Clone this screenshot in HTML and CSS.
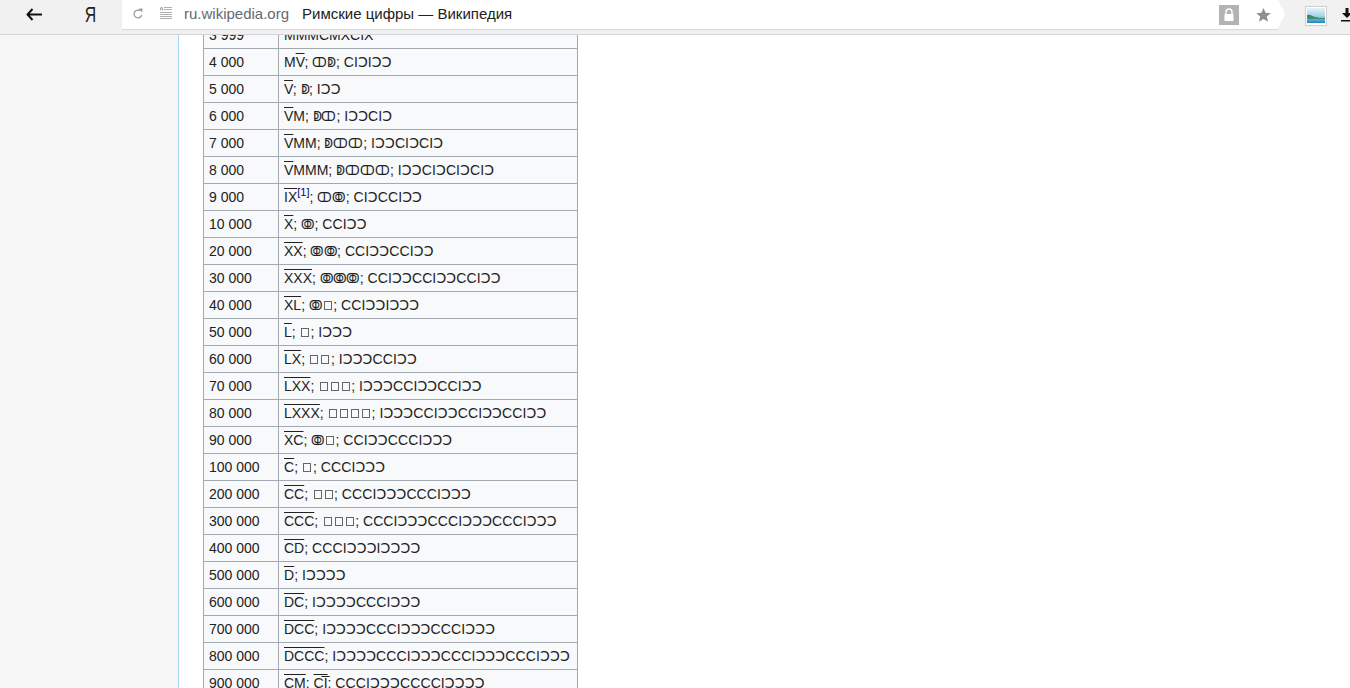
FILE: index.html
```html
<!DOCTYPE html>
<html lang="ru">
<head>
<meta charset="utf-8">
<title>Римские цифры — Википедия</title>
<link rel="stylesheet" href="styles.css">
</head>
<body>
<header class="toolbar">
  <svg class="back" width="16" height="13" viewBox="0 0 16 13"><path d="M6.500 1 1.500 6.500 6.500 12M2 6.500h14" fill="none" stroke="#111" stroke-width="2"/></svg>
  <span class="ya">Я</span>
  <div class="address">
    <svg class="reload" width="10" height="11" viewBox="0 0 10 11"><path d="M8.800 6.800A3.900 3.900 0 1 1 7.600 3" fill="none" stroke="#9a9a9a" stroke-width="1.300"/><path d="M5.800 .4 9.400 .4 9.400 4.200Z" fill="#9a9a9a"/></svg>
    <svg class="reader" width="12" height="13" viewBox="0 0 12 13"><path d="M4 .5h8M4 2.500h8M0 5.500h12M0 7.500h12M0 9.500h12M0 11.500h12" fill="none" stroke="#b0b0b0"/><path d="M0 3.500 1.500 0 3 3.500" fill="none" stroke="#777" stroke-width=".8"/></svg>
    <span class="host">ru.wikipedia.org</span>
    <span class="title">Римские цифры — Википедия</span>
    <span class="lock"><svg width="12" height="14" viewBox="0 0 12 14"><path d="M3 6V4a3 3 0 0 1 6 0v2" fill="none" stroke="#fff" stroke-width="1.400"/><rect x="1.500" y="6" width="9" height="7" fill="#fff"/></svg></span>
    <svg class="star" width="15" height="14" viewBox="0 0 16 15"><path d="M8 0l2.200 5.200 5.600.4-4.300 3.600 1.400 5.500L8 11.800l-4.900 2.900 1.400-5.500L.2 5.600l5.600-.4z" fill="#8f8f8f"/></svg>
  </div>
  <svg class="thumb" width="22" height="20" viewBox="0 0 22 20"><defs><linearGradient id="sky" x1="0" y1="0" x2="0" y2="1"><stop offset="0" stop-color="#e4f2f7"/><stop offset=".5" stop-color="#a9d8ea"/><stop offset="1" stop-color="#1f86bd"/></linearGradient></defs><rect x=".5" y=".5" width="21" height="19" fill="#fff" stroke="#cfcfcf"/><rect x="2" y="2" width="18" height="15" fill="url(#sky)"/><path d="M2 9c3-1 5 1 8 2s6 1 10 1v1H2z" fill="#3f8a68"/></svg>
  <svg class="download" width="12" height="14" viewBox="0 0 12 14"><path d="M4.500 0h3v5h3.500L6 10 1 5h3.500zM0 12h12v1.600H0z" fill="#111"/></svg>
</header>
<div class="page">
  <aside class="sidebar"></aside>
  <main class="content">
    <table class="numerals">
      <tr><td>3 999</td><td>MMMCMXCIX</td></tr>
      <tr><td>4 000</td><td>M<span class="ov">V</span>; <span class="m">ↀ</span><span class="m">ↁ</span>; <span class="ap">CIↃIↃↃ</span></td></tr>
      <tr><td>5 000</td><td><span class="ov">V</span>; <span class="m">ↁ</span>; <span class="ap">IↃↃ</span></td></tr>
      <tr><td>6 000</td><td><span class="ov">V</span>M; <span class="m">ↁ</span><span class="m">ↀ</span>; <span class="ap">IↃↃCIↃ</span></td></tr>
      <tr><td>7 000</td><td><span class="ov">V</span>MM; <span class="m">ↁ</span><span class="m">ↀ</span><span class="m">ↀ</span>; <span class="ap">IↃↃCIↃCIↃ</span></td></tr>
      <tr><td>8 000</td><td><span class="ov">V</span>MMM; <span class="m">ↁ</span><span class="m">ↀ</span><span class="m">ↀ</span><span class="m">ↀ</span>; <span class="ap">IↃↃCIↃCIↃCIↃ</span></td></tr>
      <tr><td>9 000</td><td><span class="ov">IX</span><sup class="ref">[1]</sup>; <span class="m">ↀ</span><span class="x">ↂ</span>; <span class="ap">CIↃCCIↃↃ</span></td></tr>
      <tr><td>10 000</td><td><span class="ov">X</span>; <span class="x">ↂ</span>; <span class="ap">CCIↃↃ</span></td></tr>
      <tr><td>20 000</td><td><span class="ov">XX</span>; <span class="x">ↂ</span><span class="x">ↂ</span>; <span class="ap">CCIↃↃCCIↃↃ</span></td></tr>
      <tr><td>30 000</td><td><span class="ov">XXX</span>; <span class="x">ↂ</span><span class="x">ↂ</span><span class="x">ↂ</span>; <span class="ap">CCIↃↃCCIↃↃCCIↃↃ</span></td></tr>
      <tr><td>40 000</td><td><span class="ov">XL</span>; <span class="x">ↂ</span><span class="tofu">ↇ</span>; <span class="ap">CCIↃↃIↃↃↃ</span></td></tr>
      <tr><td>50 000</td><td><span class="ov">L</span>; <span class="tofu">ↇ</span>; <span class="ap">IↃↃↃ</span></td></tr>
      <tr><td>60 000</td><td><span class="ov">LX</span>; <span class="tofu">ↇ</span><span class="tofu">ↂ</span>; <span class="ap">IↃↃↃCCIↃↃ</span></td></tr>
      <tr><td>70 000</td><td><span class="ov">LXX</span>; <span class="tofu">ↇ</span><span class="tofu">ↂ</span><span class="tofu">ↂ</span>; <span class="ap">IↃↃↃCCIↃↃCCIↃↃ</span></td></tr>
      <tr><td>80 000</td><td><span class="ov">LXXX</span>; <span class="tofu">ↇ</span><span class="tofu">ↂ</span><span class="tofu">ↂ</span><span class="tofu">ↂ</span>; <span class="ap">IↃↃↃCCIↃↃCCIↃↃCCIↃↃ</span></td></tr>
      <tr><td>90 000</td><td><span class="ov">XC</span>; <span class="x">ↂ</span><span class="tofu">ↈ</span>; <span class="ap">CCIↃↃCCCIↃↃↃ</span></td></tr>
      <tr><td>100 000</td><td><span class="ov">C</span>; <span class="tofu">ↈ</span>; <span class="ap">CCCIↃↃↃ</span></td></tr>
      <tr><td>200 000</td><td><span class="ov">CC</span>; <span class="tofu">ↈ</span><span class="tofu">ↈ</span>; <span class="ap">CCCIↃↃↃCCCIↃↃↃ</span></td></tr>
      <tr><td>300 000</td><td><span class="ov">CCC</span>; <span class="tofu">ↈ</span><span class="tofu">ↈ</span><span class="tofu">ↈ</span>; <span class="ap">CCCIↃↃↃCCCIↃↃↃCCCIↃↃↃ</span></td></tr>
      <tr><td>400 000</td><td><span class="ov">CD</span>; <span class="ap">CCCIↃↃↃIↃↃↃↃ</span></td></tr>
      <tr><td>500 000</td><td><span class="ov">D</span>; <span class="ap">IↃↃↃↃ</span></td></tr>
      <tr><td>600 000</td><td><span class="ov">DC</span>; <span class="ap">IↃↃↃↃCCCIↃↃↃ</span></td></tr>
      <tr><td>700 000</td><td><span class="ov">DCC</span>; <span class="ap">IↃↃↃↃCCCIↃↃↃCCCIↃↃↃ</span></td></tr>
      <tr><td>800 000</td><td><span class="ov">DCCC</span>; <span class="ap">IↃↃↃↃCCCIↃↃↃCCCIↃↃↃCCCIↃↃↃ</span></td></tr>
      <tr><td>900 000</td><td><span class="ov">CM</span>; <span class="ov">CI̅</span>; <span class="ap">CCCIↃↃↃCCCCIↃↃↃↃ</span></td></tr>
    </table>
  </main>
</div>
</body>
</html>
```
FILE: styles.css
```css
html, body {
  margin: 0;
  height: 100%;
  overflow: hidden;
  background: #fff;
}
body {
  display: flex;
  flex-direction: column;
  font-family: "Liberation Sans", "DejaVu Sans", sans-serif;
  color: #222;
}
.toolbar {
  flex: none;
  position: relative;
  z-index: 1;
  display: flex;
  align-items: center;
  height: 34px;
  background: #f1f1f1;
  border-bottom: 1px solid #d4d4d4;
}
.back { margin: 0 0 6px 26px; flex: none; }
.ya {
  flex: none;
  width: 12px;
  margin: 0 0 4px 41px;
  font: 22px/1 "Liberation Sans", sans-serif;
  color: #222;
  text-align: center;
  transform: scaleX(.72);
}
.address {
  flex: none;
  display: flex;
  align-items: center;
  position: relative;
  box-sizing: border-box;
  width: 1156px;
  height: 29px;
  margin: -5px 0 0 27px;
  background: #fff;
  box-shadow: 0 1px 1px #dcdcdc;
  padding: 0 0 2px 11px;
  font-size: 15px;
}
.address::after {
  content: "";
  position: absolute;
  right: -7px;
  top: 0;
  border-left: 7px solid #fff;
  border-top: 14.500px solid transparent;
  border-bottom: 14.500px solid transparent;
}
.reader { margin-left: 17px; }
.host { margin-left: 12px; color: #5f6a72; }
.title { margin-left: 13px; color: #222; }
.lock {
  margin: 2px 0 0 auto;
  width: 20px;
  height: 20px;
  background: #b3b3b3;
  display: flex;
  align-items: center;
  justify-content: center;
}
.star { margin: 2px 7px 0 17px; flex: none; }
.thumb { margin: 0 0 3px 27px; flex: none; }
.download { margin: 0 0 5px 14px; flex: none; }
.page {
  flex: 1;
  min-height: 0;
  display: flex;
  overflow: hidden;
}
.sidebar {
  flex: none;
  width: 178px;
  background: #f6f6f6;
}
.content {
  flex: 1;
  border-left: 1px solid #a7d7f9;
  padding-left: 24px;
}
.numerals {
  margin-top: -14px;
  border-collapse: collapse;
  background: #f8f9fa;
  font-size: 14px;
  line-height: 22px;
}
.numerals td {
  height: 26px;
  box-sizing: border-box;
  padding: 2px 5px;
  border: 1px solid #a2a9b1;
  white-space: nowrap;
}
.numerals td:first-child { width: 75px; }
.numerals td:last-child { width: 299px; }
.ov { text-decoration: overline; }
.ap { letter-spacing: .12px; }
.m, .x {
  display: inline-block;
  line-height: 1;
  transform-origin: 0 50%;
}
.m {
  transform: scaleX(.84);
  margin-right: -2.320px;
}
.x {
  font-size: 13.500px;
  transform: scaleX(.8);
  margin-right: -3.500px;
}
.ref {
  font-size: 11px;
  line-height: 1;
  color: #0b0080;
}
.tofu {
  display: inline-block;
  box-sizing: border-box;
  width: 8px;
  height: 9px;
  margin: 0 1.500px;
  border: 1px solid #666;
  overflow: hidden;
  color: transparent;
  font-size: 6px;
  line-height: 6px;
}
```
